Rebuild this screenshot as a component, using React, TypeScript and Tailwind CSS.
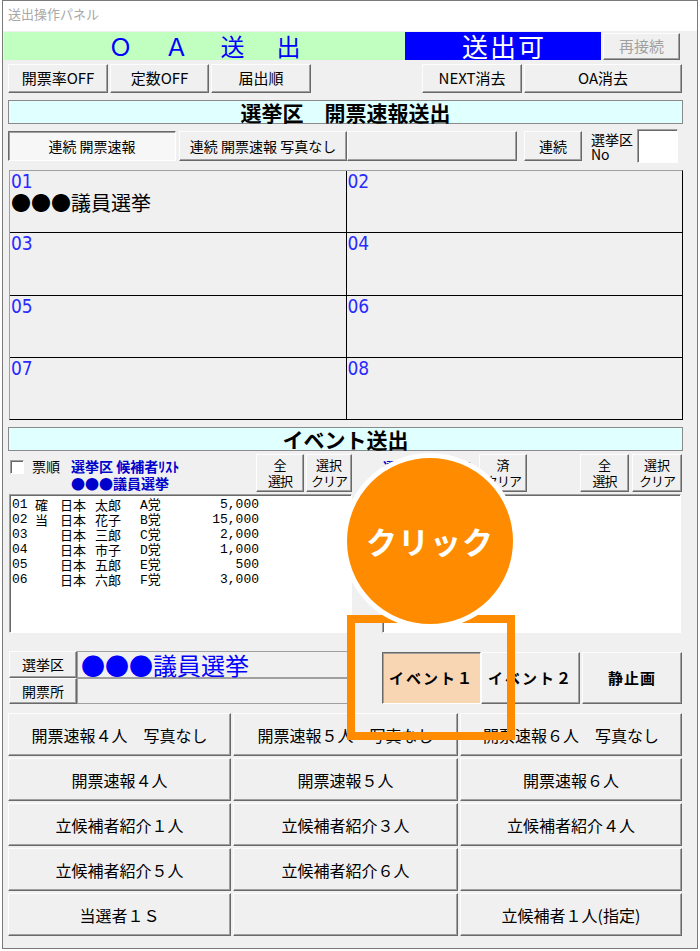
import React from "react";

// Windows-classic bevels
const raised =
  "border border-t-[#fdfdfd] border-l-[#fdfdfd] border-r-[#696969] border-b-[#696969] shadow-[inset_-1px_-1px_0_#a0a0a0]";
const pressed =
  "border border-t-[#696969] border-l-[#696969] border-r-white border-b-white shadow-[inset_1px_1px_0_#a0a0a0]";
const sunken =
  "border border-t-[#a0a0a0] border-l-[#a0a0a0] border-r-white border-b-white shadow-[inset_1px_1px_0_#696969]";

const Btn = ({
  className = "",
  down = false,
  children,
}: {
  className?: string;
  down?: boolean;
  children?: React.ReactNode;
}) => (
  <button
    type="button"
    className={`flex shrink-0 items-center justify-center ${down ? pressed : raised} ${className}`}
  >
    {children}
  </button>
);

const Banner = ({ title, className = "" }: { title: string; className?: string }) => (
  <div
    className={`ml-[5px] flex h-[24px] w-[675px] items-center justify-center border border-[#8a8a8a] bg-[#e0ffff] text-[21px] font-bold leading-none ${className}`}
  >
    {title}
  </div>
);

const TwoLine = ({ top, bottom }: { top: string; bottom: string }) => (
  <div className="flex flex-col items-center gap-[2px] text-[13px] leading-[14px]">
    <span>{top}</span>
    <span className="tracking-[-1px]">{bottom}</span>
  </div>
);

const candidates = [
  { no: "01", mark: "確", family: "日本", given: "太郎", party: "A党", votes: "5,000" },
  { no: "02", mark: "当", family: "日本", given: "花子", party: "B党", votes: "15,000" },
  { no: "03", mark: "", family: "日本", given: "三郎", party: "C党", votes: "2,000" },
  { no: "04", mark: "", family: "日本", given: "市子", party: "D党", votes: "1,000" },
  { no: "05", mark: "", family: "日本", given: "五郎", party: "E党", votes: "500" },
  { no: "06", mark: "", family: "日本", given: "六郎", party: "F党", votes: "3,000" },
];

const slots = ["01", "02", "03", "04", "05", "06", "07", "08"];

const programButtons = [
  "開票速報４人　写真なし",
  "開票速報５人　写真なし",
  "開票速報６人　写真なし",
  "開票速報４人",
  "開票速報５人",
  "開票速報６人",
  "立候補者紹介１人",
  "立候補者紹介３人",
  "立候補者紹介４人",
  "立候補者紹介５人",
  "立候補者紹介６人",
  "",
  "当選者１Ｓ",
  "",
  "立候補者１人(指定)",
];

export default function App() {
  return (
    <div className="h-[951px] w-[700px] bg-white font-['Noto_Sans_CJK_JP',sans-serif] text-black">
      <div className="relative ml-[2px] h-[949px] w-[696px] overflow-hidden border border-[#7a7a7a] bg-[#f0f0f0]">
        {/* title bar */}
        <div className="h-[30px] bg-white pl-[5px] pt-[3px] text-[13px] leading-[20px] text-[#a8a8a8]">
          送出操作パネル
        </div>

        {/* on-air status */}
        <div className="mt-px flex h-[28px] pl-px">
          <div className="flex w-[401px] items-center justify-center bg-[#c0ffc0] pl-[4px] text-[24px] leading-none tracking-[4px] text-[#0000ff]">
            Ｏ　Ａ　送　出
          </div>
          <div className="flex w-[196px] items-center justify-center bg-[#0000ff] pl-[2px] text-[26px] leading-none tracking-[2px] text-white">
            送出可
          </div>
          <Btn className="ml-[2px] mt-px h-[27px] w-[77px] text-[15px] text-[#a0a0a0]">再接続</Btn>
        </div>

        {/* toggles */}
        <div className="mt-[4px] flex h-[29px] pl-[5px] text-[15px]">
          <Btn className="h-full w-[100px]">開票率OFF</Btn>
          <Btn className="ml-[2px] h-full w-[99px]">定数OFF</Btn>
          <Btn className="ml-[2px] h-full w-[100px]">届出順</Btn>
          <Btn className="ml-[111px] h-full w-[100px]">NEXT消去</Btn>
          <Btn className="ml-[2px] h-full w-[158px]">OA消去</Btn>
        </div>

        <Banner title="選挙区　開票速報送出" className="mt-[7px] h-[23px]" />

        {/* continuous send */}
        <div className="mt-[5px] flex h-[34px] items-center pl-[5px] text-[14px]">
          <Btn down className="h-[30px] w-[168px] bg-[#f7f7f7]">
            連続 開票速報
          </Btn>
          <Btn className="ml-[3px] h-[30px] w-[168px]">連続 開票速報 写真なし</Btn>
          <Btn className="h-[30px] w-[170px]" />
          <Btn className="ml-[7px] h-[30px] w-[58px]">連続</Btn>
          <div className="ml-[9px] flex w-[46px] flex-col self-start pt-[3px] text-[14px] leading-[15px]">
            <span>選挙区</span>
            <span>No</span>
          </div>
          <div className={`h-[34px] w-[41px] bg-white ${sunken}`} />
        </div>

        {/* district slots */}
        <div className="ml-[6px] mt-[7px] grid h-[250px] w-[674px] grid-cols-2 grid-rows-4 gap-px border border-t-[#a0a0a0] border-l-[#a0a0a0] border-r-black border-b-black bg-black">
          {slots.map((no) => (
            <div key={no} className="bg-[#f0f0f0] pl-[1px] pt-[1px]">
              <div className="font-['Liberation_Sans_Narrow','DejaVu_Sans_Condensed','Liberation_Mono',monospace] text-[19px] leading-[19px] text-[#2a2aff]">
                {no}
              </div>
              {no === "01" && <div className="mt-[1px] text-[20px] leading-[22px]">●●●議員選挙</div>}
            </div>
          ))}
        </div>

        <Banner title="イベント送出" className="mt-[7px]" />

        {/* candidate list controls */}
        <div className="mt-[3px] flex h-[38px]">
          <div className={`ml-[7px] mt-[6px] h-[14px] w-[14px] shrink-0 bg-white ${sunken}`} />
          <span className="ml-[8px] mt-[4px] shrink-0 text-[14px] leading-[17px]">票順</span>
          <div className="ml-[11px] w-[175px] shrink-0 whitespace-nowrap pt-[4px] text-[14px] font-bold leading-[17px] text-[#0000cc]">
            <div>選挙区 候補者ﾘｽﾄ</div>
            <div>●●●議員選挙</div>
          </div>
          <Btn className="ml-[10px] h-full w-[48px]">
            <TwoLine top="全" bottom="選択" />
          </Btn>
          <Btn className="ml-[2px] h-full w-[46px]">
            <TwoLine top="選択" bottom="クリア" />
          </Btn>
          <div className="ml-[31px] w-[96px] shrink-0 whitespace-nowrap pt-[4px] text-[13px] font-bold leading-[17px] text-[#0000cc]">
            <div>選挙区 イベント</div>
          </div>
          <Btn className="h-full w-[48px]">
            <TwoLine top="済" bottom="クリア" />
          </Btn>
          <Btn className="ml-[53px] h-full w-[49px]">
            <TwoLine top="全" bottom="選択" />
          </Btn>
          <Btn className="ml-[3px] h-full w-[50px]">
            <TwoLine top="選択" bottom="クリア" />
          </Btn>
        </div>

        {/* list boxes */}
        <div className="mt-[2px] flex h-[139px]">
          <div className={`ml-[6px] w-[343px] bg-white pl-[2px] pt-[2px] ${sunken}`}>
            {candidates.map((c) => (
              <div
                key={c.no}
                className="flex h-[15px] items-center whitespace-nowrap text-[13px] leading-[15px]"
              >
                <span className="w-[23px] font-['Liberation_Mono',monospace]">{c.no}</span>
                <span className="w-[25px]">{c.mark}</span>
                <span className="w-[35px]">{c.family}</span>
                <span className="w-[45px]">{c.given}</span>
                <span className="w-[45px]">
                  <span className="font-['Liberation_Mono',monospace]">{c.party[0]}</span>
                  {c.party.slice(1)}
                </span>
                <span className="w-[74px] text-right font-['Liberation_Mono',monospace]">{c.votes}</span>
              </div>
            ))}
          </div>
          <div className={`ml-[30px] w-[299px] bg-white ${sunken}`} />
        </div>

        {/* selected district + event buttons */}
        <div className="mt-[18px] flex h-[53px]">
          <div className="ml-[6px] grid w-[343px] shrink-0 grid-cols-[68px_1fr] grid-rows-[27px_26px]">
            <div className={`flex items-center justify-center text-[14px] ${raised}`}>選挙区</div>
            <div className="flex items-center border border-[#a0a0a0] pl-[3px] text-[24px] leading-none text-[#0000ff]">
              ●●●議員選挙
            </div>
            <div className={`flex items-center justify-center text-[14px] ${raised}`}>開票所</div>
            <div className="border border-[#a0a0a0]" />
          </div>
          <Btn down className="ml-[30px] mt-px h-[52px] w-[99px] bg-[#f8d6b3] text-[15px] font-bold tracking-[2px]">
            イベント１
          </Btn>
          <Btn className="mt-px h-[52px] w-[99px] text-[15px] font-bold tracking-[2px]">イベント２</Btn>
          <Btn className="ml-[2px] mt-px h-[52px] w-[100px] text-[15px] font-bold tracking-[1px]">静止画</Btn>
        </div>

        {/* program buttons */}
        <div className="ml-[5px] mt-[9px] grid w-[674px] grid-cols-[223px_225px_222px] auto-rows-[43px] gap-[2px]">
          {programButtons.map((label, i) => (
            <Btn key={i} className="h-full w-full text-[16px]">
              {label}
            </Btn>
          ))}
        </div>

        {/* click callout */}
        <div className="absolute left-[344px] top-[614px] h-[125px] w-[168px] border-[8px] border-[#ff8c00]" />
        <div className="absolute left-[339px] top-[452px] flex h-[176px] w-[176px] items-center justify-center rounded-full border-[5px] border-white bg-[#ff8c00] text-[31px] font-bold tracking-[1px] text-white">
          クリック
        </div>
      </div>
    </div>
  );
}
